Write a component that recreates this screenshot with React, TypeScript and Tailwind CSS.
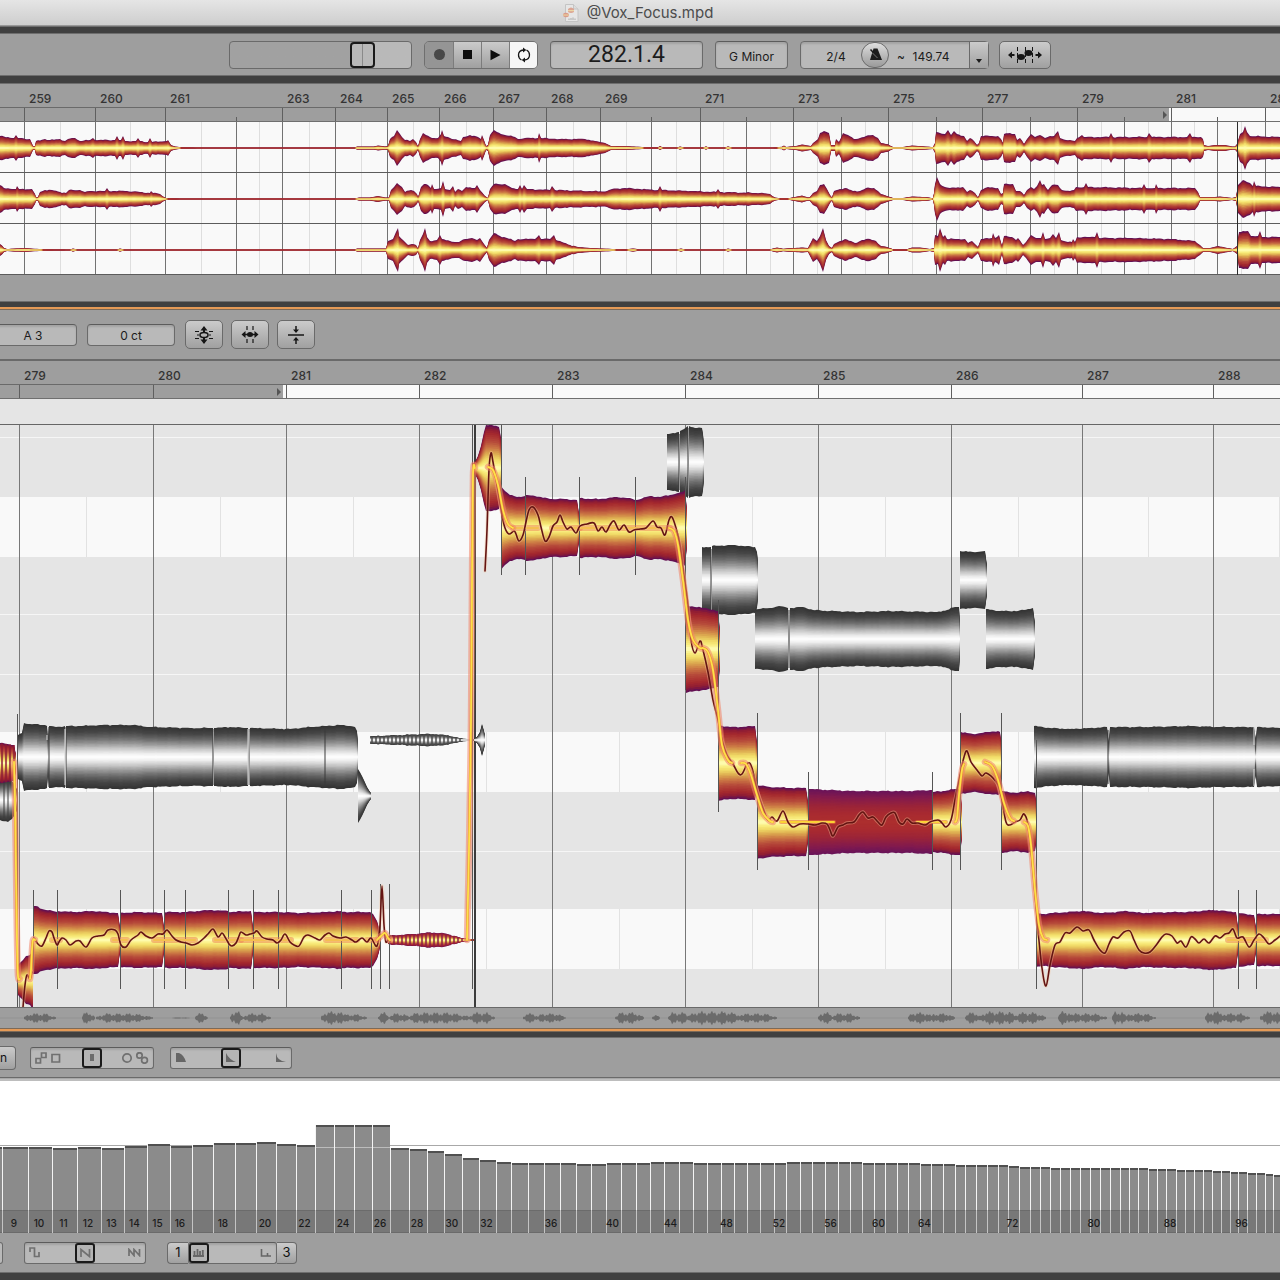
import { useState } from "react";
import type { ReactNode } from "react";

type Pt = [number, number];
type Stop = [number, number, number, number];

const SPAN = 1280;

// --- COLOUR RAMPS (edge -> centre) ---
const FIRE: Stop[] = [
  [0, 100, 16, 82],
  [0.08, 142, 28, 52],
  [0.2, 166, 42, 46],
  [0.38, 182, 74, 58],
  [0.54, 203, 120, 68],
  [0.68, 221, 172, 80],
  [0.8, 239, 215, 100],
  [0.92, 249, 238, 128],
  [1, 254, 251, 172],
];
const STEEL: Stop[] = [
  [0, 52, 52, 52],
  [0.2, 70, 70, 70],
  [0.4, 106, 106, 106],
  [0.6, 156, 156, 156],
  [0.75, 200, 200, 200],
  [0.9, 236, 236, 236],
  [1, 252, 252, 252],
];
const MUTED: Stop[] = [
  [0, 106, 20, 88],
  [0.2, 130, 26, 78],
  [0.5, 155, 36, 56],
  [0.75, 168, 42, 48],
  [1, 172, 46, 46],
];

const shade = (ramp: Stop[], t: number) => {
  let i = 1;
  while (i < ramp.length - 1 && ramp[i][0] < t) i++;
  const a = ramp[i - 1];
  const b = ramp[i];
  const f = Math.min(1, Math.max(0, (t - a[0]) / (b[0] - a[0])));
  const mix = (k: number) => Math.round(a[k] + (b[k] - a[k]) * f);
  return `rgb(${mix(1)},${mix(2)},${mix(3)})`;
};

const pairs = (list: number[]): Pt[] => {
  const out: Pt[] = [];
  for (let i = 0; i < list.length; i += 2) out.push([list[i], list[i + 1]]);
  return out;
};

const heightAt = (pts: Pt[], x: number) => {
  for (let i = 1; i < pts.length; i++) {
    if (x <= pts[i][0]) {
      const [x0, h0] = pts[i - 1];
      const [x1, h1] = pts[i];
      return h0 + ((h1 - h0) * (x - x0)) / (x1 - x0 || 1);
    }
  }
  return pts[pts.length - 1][1];
};

const ripple = (x: number) => Math.sin(x * 0.9) * 0.5 + Math.sin(x * 0.37 + 1) * 0.6 + Math.sin(x * 1.7) * 0.3;

// resample the envelope and roughen its edge a little
const roughen = (pts: Pt[], amount: number): Pt[] => {
  const out: Pt[] = [];
  pts.forEach((p, i) => {
    out.push(p);
    const next = pts[i + 1];
    if (!next) return;
    for (let x = p[0] + 2; x < next[0] - 1; x += 2) {
      const h = heightAt([p, next], x);
      out.push([x, h > 3 ? h + ripple(x) * amount : h]);
    }
  });
  return out;
};

// smooth line through a list of points
const smooth = (pts: Pt[]) => {
  let d = `M${pts[0][0]} ${pts[0][1]}`;
  for (let i = 0; i < pts.length - 1; i++) {
    const p0 = pts[i - 1] || pts[i];
    const p1 = pts[i];
    const p2 = pts[i + 1];
    const p3 = pts[i + 2] || p2;
    d += `C${p1[0] + (p2[0] - p0[0]) / 6} ${p1[1] + (p2[1] - p0[1]) / 6} ${p2[0] - (p3[0] - p1[0]) / 6} ${p2[1] - (p3[1] - p1[1]) / 6} ${p2[0]} ${p2[1]}`;
  }
  return d;
};

const Blob = ({ cy, shape, ramp = FIRE, layers = 16, rough = 0.6 }: { cy: number; shape: number[]; ramp?: Stop[]; layers?: number; rough?: number }) => {
  const pts = roughen(pairs(shape), rough);
  // near-silent parts keep only the outer, darker layers
  const scaled = (h: number, s: number) => (h < 1 && s < 0.7 ? 0 : h * s);
  const outline = (s: number) =>
    "M" +
    pts.map(([x, h]) => `${x} ${(cy - scaled(h, s)).toFixed(2)}`).join("L") +
    "L" +
    [...pts].reverse().map(([x, h]) => `${x} ${(cy + scaled(h, s)).toFixed(2)}`).join("L") +
    "Z";
  return (
    <g>
      {Array.from({ length: layers }, (_, k) => (
        <path key={k} d={outline(1 - k / layers)} fill={shade(ramp, k / (layers - 1))} />
      ))}
    </g>
  );
};

const Stripes = ({ cy, shape, from, to, color }: { cy: number; shape: number[]; from: number; to: number; color: string }) => {
  const pts = pairs(shape);
  const xs: number[] = [];
  for (let x = from; x < to; x += 4) xs.push(x);
  return (
    <g stroke={color} strokeWidth="1.5">
      {xs.map((x) => {
        const h = heightAt(pts, x);
        return <line key={x} x1={x} x2={x} y1={cy - h} y2={cy + h} />;
      })}
    </g>
  );
};

// --- OVERVIEW DATA ---
const TRACKS: { name: string; env: number[] }[] = [
  {
    name: "Track 1",
    env: [0, 12, 14, 10, 16, 13, 18, 10, 30, 9, 33, 2, 35, 2, 36, 7, 45, 9, 50, 8, 60, 9, 65, 7, 68, 9, 75, 10, 80, 7, 90, 8, 93, 10, 95, 8, 115, 8, 117, 12, 119, 8, 121, 8, 123, 12, 125, 7, 136, 7, 138, 10, 140, 7, 148, 6, 150, 10, 152, 6, 167, 7, 168, 8, 171, 3, 175, 1.5, 181, 0.8, 205, 0.5, 355, 0.5, 357, 1.5, 374, 1.5, 378, 2.5, 385, 1.5, 388, 2, 390, 9, 394, 12, 397, 18, 400, 14, 405, 8, 410, 7, 413, 9, 416, 6, 418, 1.5, 420, 9, 423, 15, 426, 13, 432, 10, 438, 10, 441, 14, 442, 18, 444, 12, 450, 10, 461, 7, 463, 11, 470, 13, 478, 11, 481, 9, 482, 13, 484, 8, 486, 2, 488, 3, 490, 13, 494, 18, 497, 16, 505, 13, 515, 11, 518, 9, 525, 10, 538, 10, 539, 15, 541, 10, 560, 9, 585, 9, 595, 7, 605, 5, 607, 4, 611, 2, 625, 1.8, 632, 1.5, 650, 0.7, 658, 0.7, 660, 1.8, 663, 0.6, 677, 0.6, 680, 1.5, 684, 0.6, 703, 0.6, 706, 1.6, 709, 0.6, 725, 0.6, 728, 1.6, 732, 0.5, 773, 0.6, 782, 1.2, 784, 2.5, 786, 1, 796, 2, 802, 3.5, 808, 2.5, 811, 2, 813, 5, 818, 9, 820, 15, 824, 17, 829, 15, 831, 3, 835, 3, 836, 9, 839, 6, 843, 15, 848, 13, 854, 9, 860, 10, 866, 12, 873, 13, 878, 10, 881, 5, 886, 4, 890, 2.5, 893, 1, 903, 1, 912, 2.5, 925, 1.5, 933, 1, 935, 5, 936, 16, 945, 14, 948, 18, 951, 13, 954, 17, 957, 14, 964, 12, 967, 7, 970, 10, 974, 7, 977, 3, 979, 5, 981, 12, 990, 12, 998, 12, 1001, 9, 1003, 5, 1004, 14, 1010, 15, 1015, 14, 1017, 8, 1020, 10, 1024, 4, 1027, 9, 1031, 14, 1035, 11, 1040, 13, 1045, 10, 1050, 12, 1054, 12, 1058, 17, 1060, 10, 1066, 8, 1075, 7, 1077, 10, 1082, 13, 1084, 11, 1109, 11, 1111, 15, 1113, 11, 1147, 11, 1149, 15, 1152, 11, 1187, 11, 1190, 15, 1192, 11, 1201, 11, 1203, 9, 1204, 3, 1208, 2, 1215, 3, 1225, 3, 1232, 1.5, 1235, 1.5, 1237, 4, 1240, 14, 1243, 16, 1245, 22, 1247, 16, 1250, 12, 1280, 11],
  },
  {
    name: "Track 2",
    env: [0, 14, 4, 11, 16, 10, 17, 13, 19, 10, 32, 10, 35, 5, 36, 1.5, 38, 2, 40, 7, 45, 9, 52, 9, 60, 7, 66, 6, 69, 9, 80, 9, 85, 7, 90, 8, 105, 8, 107, 11, 109, 8, 125, 8, 140, 7, 150, 6, 151, 8, 153, 6, 160, 5, 164, 2, 166, 1, 180, 0.6, 355, 0.5, 359, 1.5, 370, 1.5, 378, 3, 385, 1.5, 389, 1.5, 391, 9, 394, 12, 397, 16, 402, 12, 405, 7, 411, 9, 414, 8, 417, 5, 418, 1.5, 421, 12, 424, 15, 428, 14, 431, 11, 432, 15, 434, 10, 441, 11, 443, 18, 445, 10, 450, 9, 453, 13, 455, 7, 458, 10, 462, 8, 466, 12, 475, 11, 477, 14, 480, 9, 485, 3, 488, 1, 490, 10, 494, 15, 505, 15, 512, 11, 518, 10, 520, 14, 522, 10, 524, 14, 527, 10, 550, 9, 552, 13, 555, 9, 590, 8, 605, 7.5, 612, 10, 625, 11, 640, 10, 658, 9, 660, 13, 662, 9, 690, 8, 716, 7, 718, 10, 720, 7, 760, 6, 770, 5, 775, 1.5, 780, 0.8, 790, 1, 795, 2, 802, 3.5, 808, 1.5, 810, 2, 813, 6, 817, 8, 820, 14, 824, 15, 827, 10, 830, 4, 832, 1.5, 834, 8, 840, 10, 845, 11, 853, 8, 860, 8, 866, 11, 874, 11, 878, 8, 881, 5, 887, 3, 893, 1, 903, 1, 912, 2.5, 925, 2, 933, 0.8, 934, 6, 935, 15, 937, 22, 940, 15, 945, 12, 950, 11, 963, 12, 967, 7, 970, 9, 975, 6, 978, 1.5, 981, 9, 988, 12, 998, 11, 1001, 5, 1003, 6, 1004, 15, 1013, 15, 1016, 8, 1020, 8, 1024, 4, 1027, 9, 1031, 12, 1034, 10, 1037, 13, 1040, 19, 1042, 14, 1044, 15, 1048, 9, 1052, 14, 1058, 14, 1062, 9, 1070, 8, 1074, 9, 1076, 12, 1084, 12, 1086, 16, 1088, 12, 1142, 11, 1144, 15, 1146, 11, 1155, 11, 1156, 15, 1158, 11, 1195, 11, 1198, 7, 1200, 2, 1215, 2, 1220, 2.5, 1232, 1, 1236, 2, 1238, 14, 1243, 19, 1250, 16, 1253, 13, 1254, 18, 1256, 13, 1280, 12],
  },
  {
    name: "Track 3",
    env: [0, 6, 4, 2, 7, 1, 15, 1.5, 25, 1.8, 35, 1.2, 50, 0.7, 70, 0.6, 73, 1.5, 77, 0.6, 117, 0.6, 120, 1.5, 124, 0.6, 355, 0.5, 357, 1.5, 386, 1.5, 388, 9, 393, 11, 396, 18, 398, 22, 399, 14, 403, 10, 408, 5, 412, 6, 416, 5, 418, 1.5, 420, 10, 423, 16, 425, 22, 427, 13, 430, 9, 437, 10, 440, 15, 442, 11, 450, 9, 455, 8, 459, 8, 465, 11, 472, 12, 477, 10, 480, 12, 484, 6, 487, 2, 489, 10, 494, 17, 500, 14, 507, 12, 515, 9, 518, 11, 535, 11, 539, 15, 541, 11, 550, 11, 554, 15, 556, 10, 562, 8, 570, 5, 578, 3, 590, 2, 600, 1.5, 625, 0.7, 633, 1.5, 640, 0.6, 677, 0.6, 681, 1.5, 685, 0.6, 725, 0.6, 728, 1.5, 732, 0.5, 770, 0.6, 777, 2.5, 783, 1.2, 793, 2, 803, 2.5, 808, 2, 810, 6, 813, 12, 817, 9, 820, 14, 823, 22, 826, 10, 829, 4, 832, 2, 834, 6, 840, 9, 845, 11, 855, 7, 862, 10, 870, 11, 876, 9, 881, 4, 887, 3, 893, 0.8, 907, 0.8, 912, 2.5, 920, 2.5, 930, 1, 934, 2, 935, 15, 938, 14, 940, 22, 943, 13, 945, 15, 947, 11, 965, 11, 968, 7, 972, 9, 976, 5, 978, 3, 981, 11, 992, 12, 993, 17, 995, 12, 999, 15, 1002, 4, 1004, 14, 1012, 13, 1016, 10, 1018, 12, 1023, 5, 1026, 8, 1031, 15, 1036, 12, 1041, 12, 1043, 18, 1045, 11, 1050, 12, 1053, 16, 1056, 12, 1059, 18, 1061, 10, 1068, 8, 1072, 8, 1073, 11, 1075, 8, 1077, 13, 1090, 13, 1095, 13, 1097, 18, 1099, 12, 1130, 12, 1170, 11, 1195, 9, 1200, 5, 1203, 2, 1210, 2, 1218, 4, 1225, 2.5, 1233, 1, 1237, 4, 1239, 18, 1248, 19, 1251, 14, 1258, 14, 1260, 19, 1262, 13, 1280, 13],
  },
];

interface Mark {
  x: number;
  label?: string;
}

const OVERVIEW_MARKS: Mark[] = [
  { x: 24, label: "259" },
  { x: 95, label: "260" },
  { x: 165, label: "261" },
  { x: 236 },
  { x: 282, label: "263" },
  { x: 335, label: "264" },
  { x: 387, label: "265" },
  { x: 439, label: "266" },
  { x: 493, label: "267" },
  { x: 546, label: "268" },
  { x: 600, label: "269" },
  { x: 651 },
  { x: 700, label: "271" },
  { x: 746 },
  { x: 793, label: "273" },
  { x: 841 },
  { x: 888, label: "275" },
  { x: 936 },
  { x: 982, label: "277" },
  { x: 1030 },
  { x: 1077, label: "279" },
  { x: 1124 },
  { x: 1171, label: "281" },
  { x: 1217 },
  { x: 1265, label: "283" },
];

const EDITOR_MARKS: Mark[] = [
  { x: 19, label: "279" },
  { x: 153, label: "280" },
  { x: 286, label: "281" },
  { x: 419, label: "282" },
  { x: 552, label: "283" },
  { x: 685, label: "284" },
  { x: 818, label: "285" },
  { x: 951, label: "286" },
  { x: 1082, label: "287" },
  { x: 1213, label: "288" },
];

const percent = (n: number) => `${(n / SPAN) * 100}%`;
const endOf = (marks: { x: number }[], i: number) => (i + 1 < marks.length ? marks[i + 1].x : SPAN);

const Ruler = ({ marks, loopEnd }: { marks: Mark[]; loopEnd: number }) => (
  <div className="overflow-hidden bg-[#9e9e9e]">
    <div className="flex h-6 border-b border-[#6a6a6a]">
      <div className="shrink-0" style={{ width: percent(marks[0].x) }} />
      {marks.map((m, i) => (
        <div key={m.x} className="shrink-0 whitespace-nowrap pl-[5px] pt-[7px] text-xs font-medium text-[#333]" style={{ width: percent(endOf(marks, i) - m.x) }}>
          {m.label}
        </div>
      ))}
    </div>
    <div className="relative flex h-[14px] border-b border-[#6f6f6f] bg-[#f9f9f9]">
      <div className="flex items-center justify-end bg-[#9e9e9e] pr-0.5" style={{ width: percent(loopEnd) }}>
        <span className="border-y-4 border-l-4 border-y-transparent border-l-[#555]" />
      </div>
      <div className="absolute inset-0 flex items-end">
        <div className="shrink-0" style={{ width: percent(marks[0].x) }} />
        {marks.map((m, i) => (
          <div
            key={m.x}
            className={`shrink-0 border-l border-[#5f5f5f] ${m.label ? "h-full" : "h-1"}`}
            style={{ width: percent(endOf(marks, i) - m.x) }}
          />
        ))}
      </div>
    </div>
  </div>
);

const Overview = () => (
  <svg viewBox="0 0 1280 153" preserveAspectRatio="none" className="block h-[153px] w-full bg-[#f9f9f9]">
    {OVERVIEW_MARKS.map((m, i) => {
      const mid = Math.round((m.x + (i + 1 < OVERVIEW_MARKS.length ? OVERVIEW_MARKS[i + 1].x : 1312)) / 2);
      return (
        <g key={m.x}>
          <rect x={mid} y="0" width="1" height="153" fill="#dedede" />
          <rect x={m.x} y="0" width="1" height="153" fill="#727272" />
        </g>
      );
    })}
    {TRACKS.map((t, i) => (
      <g key={t.name}>
        <Blob cy={26 + i * 51} shape={t.env} layers={12} rough={0.5} />
        <rect x="0" y={50 + i * 51} width="1280" height="1" fill="#5c5c5c" />
      </g>
    ))}
    <rect x="1237" y="0" width="1" height="153" fill="#2c2c2c" />
  </svg>
);

// --- NOTE EDITOR DATA ---
const BREATH_GREY = [370, 3.5, 390, 4.5, 405, 5, 425, 6, 442, 5.5, 455, 3, 463, 1.2, 474, 0.9];
const BREATH_RED = [388, 4, 400, 5, 415, 6, 430, 7.5, 445, 6.5, 455, 4, 463, 1.5, 474, 0.8];
const HEAD_RED = [0, 20, 8, 19, 14, 18, 16, 8];

const GREY_NOTES: { cy: number; shape: number[] }[] = [
  { cy: 800, shape: [0, 20, 8, 22, 12, 19, 14, 16, 18, 8] },
  { cy: 757, shape: [17, 18, 18, 22, 22, 24, 24, 34, 30, 33, 45, 32, 47, 31, 48, 10] },
  { cy: 757, shape: [48, 10, 49, 31, 56, 30, 65, 31] },
  { cy: 757, shape: [66, 31, 80, 31, 100, 32, 133, 32, 150, 30, 190, 29, 213, 29] },
  { cy: 757, shape: [214, 29, 230, 30, 248, 29] },
  { cy: 757, shape: [250, 29, 290, 28, 310, 30, 325, 31] },
  { cy: 757, shape: [325, 31, 340, 32, 350, 31, 355, 30, 357, 26, 358, 8] },
  { cy: 796, shape: [358, 27, 362, 20, 367, 9, 370, 4, 371, 3] },
  { cy: 740, shape: BREATH_GREY },
  { cy: 740, shape: [474, 1, 477, 3, 480, 8, 482, 16, 484, 9, 485, 3] },
  { cy: 462, shape: [667, 28, 673, 29, 679, 30] },
  { cy: 462, shape: [680, 31, 684, 33, 688, 36] },
  { cy: 462, shape: [689, 36, 695, 34, 702, 34, 703, 28, 704, 15] },
  { cy: 580, shape: [702, 33, 711, 33] },
  { cy: 580, shape: [712, 34, 733, 35, 755, 33, 757, 28, 758, 15] },
  { cy: 639, shape: [755, 30, 770, 31, 779, 33, 788, 31] },
  { cy: 639, shape: [790, 31, 803, 32, 813, 29, 830, 28, 860, 27, 890, 28, 937, 27, 947, 29, 955, 32, 959, 32, 960, 10] },
  { cy: 580, shape: [960, 29, 973, 28, 985, 29, 987, 14] },
  { cy: 639, shape: [986, 30, 1000, 28, 1018, 28, 1028, 30, 1033, 31, 1035, 15] },
  { cy: 757, shape: [1034, 31, 1050, 29, 1070, 28, 1090, 29, 1107, 30, 1109, 12] },
  { cy: 757, shape: [1109, 12, 1110, 30, 1150, 30, 1190, 31, 1220, 30, 1254, 30, 1258, 4] },
  { cy: 757, shape: [1255, 1, 1257, 30, 1280, 29] },
];

const RED_NOTES: { cy: number; shape: number[]; ramp?: Stop[] }[] = [
  { cy: 763, shape: HEAD_RED },
  { cy: 980, shape: [18, 15, 23, 20, 26, 24, 30, 25, 32, 28, 33, 28] },
  { cy: 940, shape: [33, 34, 36, 34, 42, 31, 53, 29, 57, 28] },
  { cy: 940, shape: [57, 29, 75, 28, 92, 29, 118, 27, 120, 12] },
  { cy: 940, shape: [120, 27, 138, 28, 162, 27, 164, 12] },
  { cy: 940, shape: [164, 28, 185, 28, 210, 30, 228, 29] },
  { cy: 940, shape: [228, 28, 251, 29, 253, 12] },
  { cy: 940, shape: [253, 28, 278, 28, 300, 27, 325, 28, 341, 29] },
  { cy: 940, shape: [341, 28, 370, 28, 373, 26, 377, 19, 379, 12, 380, 6] },
  { cy: 940, shape: BREATH_RED },
  { cy: 468, shape: [472, 3, 475, 6, 478, 12, 481, 22, 484, 36, 486, 43, 492, 43, 499, 41, 501, 30] },
  { cy: 528, shape: [501, 42, 505, 37, 510, 33, 517, 31, 525, 32] },
  { cy: 528, shape: [525, 33, 535, 32, 550, 29, 565, 29, 577, 28, 579, 14] },
  { cy: 528, shape: [580, 30, 590, 29, 600, 29, 617, 31, 630, 30, 635, 28] },
  { cy: 528, shape: [636, 28, 650, 32, 660, 31, 675, 34, 683, 36, 685, 38, 687, 18] },
  { cy: 649, shape: [686, 44, 695, 42, 706, 41, 716, 38, 718, 38, 720, 18] },
  { cy: 763, shape: [718, 38, 730, 36, 740, 36, 755, 37, 757, 20] },
  { cy: 822, shape: [757, 37, 770, 35, 790, 34, 806, 34, 808, 20] },
  { cy: 822, shape: [809, 33, 830, 32, 850, 31, 880, 31, 910, 31, 932, 32], ramp: MUTED },
  { cy: 822, shape: [933, 30, 943, 31, 955, 33, 960, 33, 962, 15] },
  { cy: 763, shape: [961, 31, 973, 29, 988, 31, 998, 32, 1000, 31, 1002, 15] },
  { cy: 822, shape: [1001, 31, 1017, 29, 1028, 31, 1035, 29, 1037, 14] },
  { cy: 940, shape: [1036, 27, 1042, 26, 1053, 27, 1082, 29, 1103, 27, 1127, 29, 1142, 27, 1173, 28, 1187, 28, 1213, 30, 1236, 28, 1238, 12] },
  { cy: 940, shape: [1238, 27, 1254, 25, 1256, 12] },
  { cy: 940, shape: [1257, 26, 1280, 26] },
];

// x, top, bottom
const SPLITS: [number, number, number][] = [
  [17, 714, 1007], [33, 890, 970], [57, 890, 989], [120, 890, 989], [164, 890, 989], [185, 890, 989], [228, 890, 989],
  [253, 890, 989], [278, 890, 989], [341, 890, 989], [371, 890, 989], [380, 884, 989], [389, 884, 989],
  [472, 425, 989], [501, 425, 575], [525, 477, 575], [579, 477, 575], [635, 477, 575], [685, 477, 690],
  [718, 600, 812], [757, 713, 870], [808, 772, 870], [932, 772, 870], [960, 713, 870], [1001, 713, 870],
  [1036, 740, 989], [1238, 890, 989], [1256, 890, 989],
];

const PITCH: number[][] = [
  [23, 1007, 25, 985, 27, 975, 30, 979, 32, 972],
  [34, 938, 38, 944, 42, 946, 46, 938, 49, 931, 52, 932, 54, 938, 57, 945, 59, 942, 62, 938, 66, 940, 70, 945, 76, 941, 80, 941, 86, 947, 92, 938, 98, 936, 104, 935, 108, 930, 115, 930, 118, 934, 121, 945, 126, 947, 131, 940, 138, 935, 141, 932, 146, 936, 152, 938, 158, 934, 163, 934, 167, 930, 172, 936, 176, 940, 181, 942, 186, 943, 192, 945, 198, 943, 204, 938, 208, 934, 213, 929, 218, 937, 222, 933, 225, 937, 229, 944, 232, 946, 236, 943, 239, 936, 241, 932, 246, 935, 250, 934, 254, 933, 257, 931, 262, 937, 267, 939, 273, 940, 277, 943, 281, 940, 285, 934, 290, 942, 294, 945, 299, 946, 304, 937, 308, 935, 315, 938, 320, 940, 325, 935, 329, 933, 333, 936, 340, 938, 346, 937, 352, 940, 356, 942, 362, 938, 367, 942, 371, 938, 377, 946, 380, 925, 382, 886, 384, 925, 386, 942, 390, 936],
  [485, 571, 487, 530, 489, 470, 491, 453, 493, 462, 497, 485, 502, 515, 505, 528, 509, 534, 514, 531, 516, 534, 519, 541, 523, 535, 526, 522, 529, 510, 533, 507, 538, 515, 541, 527, 545, 541, 549, 537, 553, 526, 557, 522, 560, 515, 563, 522, 567, 529, 571, 527, 576, 533, 580, 526, 587, 524, 594, 523, 598, 531, 602, 527, 606, 532, 610, 525, 614, 521, 619, 530, 624, 525, 629, 532, 634, 530, 640, 529, 646, 528, 653, 521, 657, 527, 661, 528, 665, 535, 669, 520, 672, 517, 676, 528, 680, 545, 684, 575, 688, 605, 691, 640, 695, 653, 700, 641, 703, 650, 708, 672, 713, 700, 718, 720, 722, 740, 727, 755, 733, 764, 738, 773, 742, 774, 748, 763, 752, 768, 757, 790, 763, 808, 768, 820, 772, 817, 777, 821, 783, 811, 788, 822, 793, 827, 800, 824, 808, 824, 815, 825, 822, 823, 827, 824, 830, 830, 833, 836, 838, 827, 843, 825, 847, 823, 854, 822, 859, 815, 863, 812, 868, 818, 873, 817, 878, 822, 882, 825, 886, 817, 891, 813, 895, 813, 899, 822, 903, 824, 907, 819, 912, 823, 918, 823, 925, 825, 930, 822, 938, 820, 942, 823, 946, 827, 951, 820, 955, 800, 960, 775, 964, 757, 967, 751, 971, 762, 977, 770, 982, 776, 986, 773, 993, 778, 998, 785, 1002, 800, 1006, 822, 1010, 825, 1015, 822, 1020, 820, 1024, 814, 1028, 825, 1033, 870, 1038, 930, 1042, 968, 1046, 986, 1050, 965, 1055, 945, 1060, 942, 1065, 933, 1070, 933, 1077, 927, 1083, 931, 1089, 930, 1094, 940, 1100, 950, 1105, 953, 1109, 944, 1113, 937, 1118, 938, 1124, 932, 1130, 931, 1134, 940, 1139, 950, 1144, 953, 1150, 952, 1157, 944, 1162, 937, 1166, 934, 1172, 936, 1177, 943, 1181, 941, 1186, 947, 1191, 937, 1195, 939, 1199, 943, 1204, 939, 1209, 943, 1215, 936, 1220, 938, 1225, 934, 1229, 933, 1233, 929, 1237, 938, 1243, 937, 1249, 947, 1254, 940, 1259, 934, 1264, 938, 1269, 944, 1275, 940, 1280, 936],
];

const GLIDES: number[][] = [
  [14, 762, 15, 800, 16, 870, 17, 940, 18, 976, 20, 979],
  [30, 979, 31, 970, 32, 950, 33, 940, 35, 940],
  [377, 940, 381, 936, 385, 933, 388, 938, 390, 940],
  [467, 940, 469, 850, 471, 720, 472, 580, 473, 475, 475, 468],
  [488, 467, 493, 470, 498, 485, 503, 510, 508, 524, 513, 528],
  [669, 528, 674, 531, 678, 545, 683, 580, 688, 620, 693, 640, 700, 648, 703, 648, 708, 652, 713, 670, 718, 710, 722, 745, 728, 760, 732, 763],
  [741, 763, 746, 764, 751, 775, 757, 795, 763, 813, 770, 821, 773, 822],
  [955, 822, 957, 818, 959, 795, 962, 770, 964, 764],
  [985, 762, 992, 766, 998, 780, 1004, 803, 1010, 818, 1014, 821],
  [1024, 822, 1028, 826, 1031, 845, 1035, 890, 1039, 925, 1043, 938, 1047, 940],
];

// from, to, y
const HOLDS: [number, number, number][] = [
  [52, 60, 940], [113, 127, 940], [154, 195, 940], [215, 241, 940], [241, 291, 940], [326, 357, 940], [367, 378, 940],
  [513, 538, 528], [552, 580, 528], [580, 670, 528], [1228, 1266, 940],
];
const THIN_HOLDS: [number, number, number][] = [[781, 834, 822], [917, 946, 822]];

const NoteEditor = () => (
  <svg viewBox="0 425 1280 582" preserveAspectRatio="none" className="block h-[582px] w-full bg-[#e5e5e5]">
    {[497, 732, 909].map((y) => (
      <g key={y}>
        <rect x="0" y={y} width="1280" height="60" fill="#f9f9f9" />
        {[86, 220, 353, 486, 619, 752, 885, 1018, 1148, 1279].map((x) => (
          <rect key={x} x={x} y={y} width="1" height="60" fill="#e2e2e2" />
        ))}
      </g>
    ))}
    {[437, 614, 674, 851].map((y) => (
      <rect key={y} x="0" y={y} width="1280" height="1" fill="#f6f6f6" />
    ))}
    {EDITOR_MARKS.map((m) => (
      <rect key={m.x} x={m.x} y="425" width="1" height="582" fill="#787878" />
    ))}
    <rect x="474" y="425" width="2" height="582" fill="#3c3c3c" />

    {GREY_NOTES.map((n, i) => (
      <Blob key={i} {...n} ramp={STEEL} layers={22} rough={0.5} />
    ))}
    <path d="M4 782V818M8 782V820M49 727V787M66 727V787M213 729V785M249 729V785M325 727V787M679 434V490M688 428V496M711 549V612M789 610V668M1108 730V784" fill="none" stroke="#3a3a3a" />
    <path d="M248 729V785M65 729V785M47 735V740M1254 727V745M1254 769V786" stroke="#d8d8d8" fill="none" />
    <Stripes cy={740} shape={BREATH_GREY} from={372} to={462} color="#4a4a4a" />

    {RED_NOTES.map((n, i) => (
      <Blob key={i} {...n} layers={22} rough={0.5} />
    ))}
    <Stripes cy={763} shape={HEAD_RED} from={2} to={15} color="#8c1a34" />
    <Stripes cy={940} shape={BREATH_RED} from={390} to={464} color="#8c1a44" />

    {SPLITS.map(([x, y1, y2]) => (
      <rect key={x} x={x} y={y1} width="1" height={y2 - y1} fill="#555" />
    ))}

    <g fill="none" strokeLinecap="round" strokeLinejoin="round">
      {HOLDS.map(([a, b, y]) => (
        <g key={a}>
          <path d={`M${a} ${y}H${b}`} stroke="#ec7f4c" strokeOpacity="0.5" strokeWidth="6" />
          <path d={`M${a} ${y}H${b}`} stroke="#f4c050" strokeWidth="2" />
        </g>
      ))}
      {THIN_HOLDS.map(([a, b, y]) => (
        <g key={a}>
          <path d={`M${a} ${y}H${b}`} stroke="#e8743c" strokeWidth="4" strokeOpacity="0.6" />
          <path d={`M${a} ${y}H${b}`} stroke="#fbd233" strokeWidth="2" />
        </g>
      ))}
      {PITCH.map((p, i) => (
        <g key={i}>
          <path d={smooth(pairs(p))} stroke="#f7c9a0" strokeOpacity="0.4" strokeWidth="3.5" />
          <path d={smooth(pairs(p))} stroke="#641412" strokeWidth="1.6" />
        </g>
      ))}
      {GLIDES.map((p, i) => (
        <g key={i}>
          <path d={smooth(pairs(p))} stroke="#f08468" strokeOpacity="0.55" strokeWidth="6.5" />
          <path d={smooth(pairs(p))} stroke="#e8842e" strokeWidth="2.6" />
          <path d={smooth(pairs(p))} stroke="#fde14a" strokeWidth="1.8" />
        </g>
      ))}
    </g>
  </svg>
);

// source audio shown under the notes: from, to, height
const CLUSTERS: [number, number, number][] = [
  [24, 56, 5], [82, 95, 6], [96, 153, 5], [172, 190, 0.6], [195, 208, 5], [230, 243, 7], [243, 271, 5], [321, 348, 7], [340, 367, 4],
  [378, 389, 6], [389, 410, 5], [406, 472, 6], [469, 495, 6], [523, 539, 5], [537, 566, 5], [615, 644, 6], [652, 660, 3],
  [668, 692, 6], [686, 748, 7], [740, 777, 5], [818, 834, 6], [831, 860, 5], [908, 934, 6], [930, 955, 5], [965, 981, 6], [979, 1022, 7],
  [1014, 1046, 6], [1058, 1074, 7], [1068, 1107, 5], [1112, 1127, 7], [1125, 1156, 5], [1205, 1228, 7], [1222, 1250, 5], [1260, 1284, 7],
];

const SourceStrip = () => (
  <svg viewBox="0 0 1280 20" preserveAspectRatio="none" className="block h-5 w-full bg-[#9e9e9e]">
    <path d="M0 10H1280" stroke="#929292" strokeWidth="1" />
    {CLUSTERS.map(([a, b, h]) => {
      const top: string[] = [];
      const low: string[] = [];
      for (let x = a; x <= b; x++) {
        const t = (x - a) / (b - a);
        const grain = 0.66 + 0.2 * Math.sin(x * 1.9) + 0.2 * Math.sin(x * 0.61 + h);
        const r = h * Math.min(1, 5 * t + 0.2, 2.5 * (1 - t) + 0.2) * grain;
        top.push(`${x} ${(10 - r).toFixed(1)}`);
        low.unshift(`${x} ${(10 + r).toFixed(1)}`);
      }
      return <path key={a} d={`M${top.join("L")}L${low.join("L")}Z`} fill="#6b6b6b" />;
    })}
  </svg>
);

// --- HARMONICS CHART ---
const BAR_X = [
  2, 28, 52, 77, 101, 124, 147, 170, 192, 213, 235, 256, 276, 296, 315, 334, 354, 372, 390, 409, 427, 444, 462, 479, 496, 511, 528,
  544, 560, 576, 591, 606, 621, 636, 650, 664, 679, 693, 707, 721, 734, 747, 760, 774, 786, 800, 812, 825, 838, 850, 862, 874, 885,
  897, 908, 920, 931, 943, 955, 965, 976, 987, 998, 1008, 1019, 1030, 1040, 1050, 1060, 1070, 1080, 1090, 1100, 1110, 1120, 1129,
  1138, 1148, 1157, 1166, 1176, 1185, 1194, 1203, 1212, 1221, 1230, 1238, 1247, 1256, 1265, 1273,
];
const BAR_H = [
  63, 63, 62, 63, 62, 64, 66, 64, 65, 67, 67, 68, 66, 65, 85, 85, 85, 85, 62, 61, 59, 56, 52, 50, 48, 47, 47, 47, 47, 46, 46, 47, 47,
  47, 48, 48, 48, 47, 47, 47, 47, 47, 47, 47, 48, 48, 48, 48, 48, 48, 47, 47, 47, 47, 47, 46, 46, 46, 45, 45, 45, 45, 45, 44, 43, 43,
  43, 42, 42, 42, 42, 42, 42, 42, 42, 42, 42, 41, 41, 41, 40, 40, 40, 40, 39, 39, 38, 38, 37, 37, 36, 35,
];
const NAMED = [9, 10, 11, 12, 13, 14, 15, 16, 18, 20, 22, 24, 26, 28, 30, 32, 36, 40, 44, 48, 52, 56, 60, 64, 72, 80, 88, 96];

const Harmonics = () => (
  <div className="relative flex h-[154px] items-end overflow-hidden border-t-2 border-[#bdbdbd] bg-white">
    <div className="absolute inset-x-0 top-16 h-px bg-[#a8a8a8]" />
    <div className="relative flex shrink-0 flex-col" style={{ width: percent(BAR_X[0]) }}>
      <div className="h-[63px] border-t-2 border-[#505050] bg-[#8b8b8b]" />
      <div className="h-[23px] border-y border-[#6b6b6b] bg-[#787878]" />
    </div>
    {BAR_X.map((x, i) => {
      const n = i + 9;
      const picked = n >= 23 && n <= 26;
      return (
        <div key={x} className="relative flex shrink-0 flex-col" style={{ width: percent((BAR_X[i + 1] ?? SPAN) - x) }}>
          <div className="border-l border-[#f4f4f4]">
            <div className="border-t-2 border-[#505050] bg-[#8b8b8b]" style={{ height: BAR_H[i] }}>
              {picked && <div className="mt-5 h-px bg-[#bcbcbc]" />}
            </div>
          </div>
          <div className="border-l border-[#c4c4c4]">
            <div className="flex h-[23px] items-center justify-center border-y border-[#6b6b6b] bg-[#787878] pr-[3px] pt-1 text-[10px] font-medium text-[#1c1c1c]">
              {NAMED.includes(n) && <span className="relative z-10">{n}</span>}
            </div>
          </div>
        </div>
      );
    })}
  </div>
);

// --- CONTROLS ---
const RAISED = "flex items-center justify-center border border-[#6a6a6a] bg-linear-to-b from-[#cbcbcb] to-[#a0a0a0] text-[#111]";
const SUNKEN = "border border-[#6a6a6a] border-t-[#5c5c5c] bg-[#b9b9b9] text-center text-[#1c1c1c] shadow-[inset_0_2px_2px_rgba(0,0,0,0.12)] outline-none";

const Field = ({ label, value, className }: { label: string; value: string; className: string }) => (
  <input aria-label={label} defaultValue={value} className={`${SUNKEN} rounded ${className}`} />
);

const IconButton = ({ label, className, children }: { label: string; className: string; children: ReactNode }) => (
  <button type="button" aria-label={label} className={`${RAISED} ${className}`}>
    {children}
  </button>
);

// slider with small glyphs printed on its track
const GlyphSlider = ({ label, value, className, left, thumb, right }: { label: string; value: number; className: string; left?: ReactNode; thumb: ReactNode; right: ReactNode }) => (
  <div className={`relative h-[22px] ${className}`}>
    <input
      type="range"
      aria-label={label}
      defaultValue={value}
      className={`${SUNKEN} block h-full w-full appearance-none rounded-[3px] [&::-webkit-slider-thumb]:h-5 [&::-webkit-slider-thumb]:w-5 [&::-webkit-slider-thumb]:appearance-none [&::-webkit-slider-thumb]:rounded-[3px] [&::-webkit-slider-thumb]:border-2 [&::-webkit-slider-thumb]:border-[#1a1a1a] [&::-webkit-slider-thumb]:bg-[#b4b4b4]`}
    />
    <div className="pointer-events-none absolute inset-0 flex items-center justify-between px-[5px]">
      {left}
      {thumb}
      {right}
    </div>
  </div>
);

const DarkBar = ({ className = "h-2" }: { className?: string }) => <div className={`border-y border-[#6e6e6e] bg-[#404040] ${className}`} />;

const TitleBar = () => (
  <header className="flex h-[26px] items-center justify-center gap-2 border-b border-[#989898] bg-linear-to-b from-[#e5e5e5] to-[#cecece] pr-1">
    <svg width="16" height="20" viewBox="0 0 16 20">
      <path d="M2.5 1.5H10.5L15 6V18.5H2.5Z" fill="#e6e6e6" stroke="#c4c4c4" />
      <path d="M10.5 1.5V6H15" fill="#dcdcdc" stroke="#c4c4c4" />
      <path d="M5 6Q8 3 11 6V9Q8 11 5 9Z" fill="#dba593" />
      <path d="M5 7H11V8.2H5Z" fill="#ecd6a4" />
      <path d="M0 11Q2.5 8.5 6 11V13Q3 15.5 0 13Z" fill="#da9a88" />
      <path d="M0 11.5H6V12.6H0Z" fill="#ecd6a4" />
      <path d="M6 17V15.5M8 17V15M10 17V14.5M12 17V15.5" stroke="#aaa" />
    </svg>
    <h1 className="text-[15px] leading-5 text-[#4c4c4c]">@Vox_Focus.mpd</h1>
  </header>
);

const Transport = () => {
  const [cycle, setCycle] = useState(true);
  return (
    <div className="flex h-7 overflow-hidden rounded-[5px] border border-[#6f6f6f]">
      <button type="button" aria-label="Record" className="flex w-7 items-center justify-center bg-[#959595]">
        <span className="h-[11px] w-[11px] rounded-full bg-[#484848]" />
      </button>
      <button type="button" aria-label="Stop" className="flex w-7 items-center justify-center border-l border-[#7c7c7c] bg-linear-to-b from-[#cbcbcb] to-[#a0a0a0]">
        <span className="h-[9px] w-[9px] bg-[#0e0e0e]" />
      </button>
      <button type="button" aria-label="Play" className="flex w-7 items-center justify-center border-l border-[#7c7c7c] bg-linear-to-b from-[#cbcbcb] to-[#a0a0a0]">
        <svg width="11" height="12" viewBox="0 0 11 12">
          <path d="M0.5 0.8L10.5 6L0.5 11.2Z" fill="#0e0e0e" />
        </svg>
      </button>
      <button type="button" aria-label="Cycle" aria-pressed={cycle} onClick={() => setCycle(!cycle)} className={`flex w-7 items-center justify-center border-l border-[#7c7c7c] ${cycle ? "bg-[#f6f6f6]" : "bg-[#b5b5b5]"}`}>
        <svg width="14" height="16" viewBox="0 0 14 16" fill="none" stroke="#161616" strokeWidth="1.3">
          <path d="M4.5 13Q1.5 11.5 1.5 8Q1.5 3.5 6.5 3" />
          <path d="M9.5 3Q12.5 4.5 12.5 8Q12.5 12.5 7.5 13" />
          <path d="M6 0.5L9.3 3L6 5.5Z M8 10.5L4.7 13L8 15.5Z" fill="#161616" stroke="none" />
        </svg>
      </button>
    </div>
  );
};

const MainToolbar = () => (
  <div className="flex h-[41px] items-center justify-center gap-3 bg-[#9e9e9e]">
    <input
      type="range"
      aria-label="Volume"
      defaultValue={77}
      className="h-7 w-[183px] appearance-none rounded border border-[#6a6a6a] bg-linear-to-r from-[#a1a1a1] from-75% to-[#b9b9b9] to-75% [&::-webkit-slider-thumb]:h-[26px] [&::-webkit-slider-thumb]:w-[25px] [&::-webkit-slider-thumb]:appearance-none [&::-webkit-slider-thumb]:rounded [&::-webkit-slider-thumb]:border-2 [&::-webkit-slider-thumb]:border-[#1a1a1a] [&::-webkit-slider-thumb]:bg-[linear-gradient(to_right,#b9b9b9_10px,#8a8a8a_10px,#8a8a8a_11px,#b9b9b9_11px)]"
    />
    <Transport />
    <Field label="Position" value="282.1.4" className="h-7 w-[153px] font-['Roboto','Inter',sans-serif] text-[23px] leading-6" />
    <button type="button" className={`${SUNKEN} h-7 w-[73px] rounded pt-1 text-xs`}>
      G Minor
    </button>
    <div className="flex items-center gap-[10px]">
      <div className="flex h-7 w-[189px] items-stretch rounded border border-[#6a6a6a] bg-[#b9b9b9] text-xs text-[#1c1c1c] shadow-[inset_0_2px_2px_rgba(0,0,0,0.12)]">
        <input aria-label="Time signature" defaultValue="2/4" className="w-[60px] bg-transparent pl-[10px] pt-1 text-center outline-none" />
        <button type="button" aria-label="Metronome" className="flex h-[26px] w-7 items-center justify-center rounded-full border border-[#6a6a6a] bg-linear-to-b from-[#dedede] to-[#9a9a9a]">
          <svg width="17" height="15" viewBox="0 0 17 15">
            <path d="M6.5 1.5H10.5L15 13H3Z" fill="#1d1d1d" />
            <path d="M3.5 2.5L10 9.5" stroke="#1d1d1d" strokeWidth="1.5" />
            <path d="M5.5 6L10.5 11" stroke="#8d8d8d" strokeWidth="0.8" />
          </svg>
        </button>
        <label className="flex items-center pt-1">
          <span className="pl-2">~</span>
          <input aria-label="Tempo" defaultValue="149.74" className="w-[52px] bg-transparent text-center outline-none" />
        </label>
        <button type="button" aria-label="Tempo options" className="ml-auto flex w-[19px] items-end justify-center border-l border-[#6a6a6a] bg-linear-to-b from-[#cbcbcb] to-[#a0a0a0] pb-[5px]">
          <span className="border-x-[3px] border-t-4 border-x-transparent border-t-[#1c1c1c]" />
        </button>
      </div>
      <IconButton label="Note assignment" className="h-7 w-[52px] rounded-[5px]">
        <svg width="34" height="16" viewBox="0 0 34 16">
          <path d="M0 8L4 4.500V11.500ZM34 8L30 4.500V11.500Z" fill="#161616" />
          <path d="M3 8H6.500M27.500 8H31" stroke="#161616" strokeWidth="2" />
          <path d="M9.500 0V16M17.500 0V16M24.500 0V16" stroke="#161616" strokeDasharray="4 2" />
          <ellipse cx="13" cy="10" rx="4" ry="3" fill="#161616" />
          <ellipse cx="20.5" cy="6" rx="4" ry="3" fill="#161616" />
        </svg>
      </IconButton>
    </div>
  </div>
);

const EditToolbar = () => (
  <div className="flex h-[49px] items-center gap-2 overflow-hidden bg-[#9e9e9e]">
    <Field label="Note pitch" value="A 3" className="-ml-[11px] mr-0.5 h-[22px] w-[88px] pt-0.5 text-xs" />
    <Field label="Pitch deviation" value="0 ct" className="mr-0.5 h-[22px] w-[88px] pt-0.5 text-xs" />
    <IconButton label="Pitch" className="h-[29px] w-[38px] rounded-[5px]">
      <svg width="20" height="18" viewBox="0 0 20 18" fill="none" stroke="#161616">
        <path d="M10 1V6M10 12V17" strokeWidth="2" />
        <path d="M10 0L13.500 4.500H6.500ZM10 18L13.500 13.500H6.500Z" fill="#161616" stroke="none" />
        <ellipse cx="10" cy="9" rx="4" ry="2.5" strokeWidth="1.5" />
        <path d="M1 5.500H5M15 5.500H19M1 12.500H5M15 12.500H19" strokeWidth="1.2" />
        <path d="M3 9H5M15 9H17" strokeWidth="1" />
      </svg>
    </IconButton>
    <IconButton label="Time" className="h-[29px] w-[38px] rounded-[5px]">
      <svg width="18" height="17" viewBox="0 0 18 17" fill="none" stroke="#161616">
        <path d="M6 0V4M12 0V4M6 13V17M12 13V17" strokeWidth="1.2" />
        <path d="M2 8.500H16" strokeWidth="1.5" />
        <path d="M0.500 8.500L4.500 5V12ZM17.500 8.500L13.500 5V12Z" fill="#161616" stroke="none" />
        <ellipse cx="9" cy="8.5" rx="3" ry="2.5" fill="#161616" stroke="none" />
      </svg>
    </IconButton>
    <IconButton label="Quantize" className="h-[29px] w-[38px] rounded-[5px]">
      <svg width="16" height="20" viewBox="0 0 16 20">
        <path d="M0 10H16M8 1V6M8 14V19" stroke="#161616" strokeWidth="1.5" />
        <path d="M8 8L5 4.500H11ZM8 12L5 15.500H11Z" fill="#161616" />
      </svg>
    </IconButton>
  </div>
);

const SoundToolbar = () => (
  <div className="flex h-[39px] items-center bg-[#9e9e9e]">
    <button type="button" className="h-6 w-4 rounded-r border border-l-0 border-[#6a6a6a] bg-linear-to-b from-[#cbcbcb] to-[#a0a0a0] text-left text-xs text-[#111]">
      n
    </button>
    <div className="ml-[14px]">
      <GlyphSlider
        label="Harmonics"
        value={50}
        className="w-[124px]"
        left={
          <svg width="28" height="12" viewBox="0 0 28 12" fill="none" stroke="#707070" strokeWidth="1.7">
            <path d="M1 6.500H5.500V11H1ZM6.500 1H11V5.500H6.500ZM17 2.500H24.500V10H17Z" />
          </svg>
        }
        thumb={<span className="h-[7px] w-1 bg-[#6c6c6c]" />}
        right={
          <svg width="28" height="12" viewBox="0 0 28 12" fill="none" stroke="#707070" strokeWidth="1.7">
            <circle cx="6" cy="6" r="4.2" />
            <circle cx="18.5" cy="3.5" r="2.7" />
            <circle cx="23.5" cy="8.3" r="2.9" />
          </svg>
        }
      />
    </div>
    <div className="ml-4">
      <GlyphSlider
        label="Brilliance"
        value={50}
        className="w-[122px]"
        left={
          <svg width="12" height="10" viewBox="0 0 12 10">
            <path d="M1 9V0H4Q9 2 11 9Z" fill="#666" />
          </svg>
        }
        thumb={
          <svg width="10" height="10" viewBox="0 0 10 10">
            <path d="M0 9V0Q3 6.500 10 9Z" fill="#666" />
          </svg>
        }
        right={
          <svg width="12" height="10" viewBox="0 0 12 10">
            <path d="M1 9V0Q2 8 11 9Z" fill="#666" />
          </svg>
        }
      />
    </div>
  </div>
);

const ContourToolbar = () => (
  <div className="flex h-[39px] items-center bg-[#9e9e9e]">
    <button type="button" aria-label="Emphasis" className="h-[22px] w-[3px] rounded-r border border-l-0 border-[#6a6a6a] bg-[#b9b9b9]" />
    <div className="ml-[21px]">
      <GlyphSlider
        label="Contour"
        value={50}
        className="w-[122px]"
        left={
          <svg width="13" height="11" viewBox="0 0 13 11" fill="none" stroke="#707070" strokeWidth="1.7">
            <path d="M1 5V1H5.500V9.500H10V5" />
          </svg>
        }
        thumb={
          <svg width="11" height="10" viewBox="0 0 11 10" fill="none" stroke="#707070" strokeWidth="1.7">
            <path d="M1 9V1.500L9.500 8.500V1" />
          </svg>
        }
        right={
          <svg width="13" height="9" viewBox="0 0 13 9" fill="none" stroke="#707070" strokeWidth="1.7">
            <path d="M1 8V1.500L6 7.500V1.500L11.500 7.500V1" />
          </svg>
        }
      />
    </div>
    <div className="ml-[21px] flex">
      <button type="button" className={`${RAISED} h-[22px] w-[21px] rounded-l border-r-0 text-[13px]`}>
        1
      </button>
      <GlyphSlider
        label="Detail"
        value={0}
        className="w-[89px]"
        thumb={
          <svg width="11" height="9" viewBox="0 0 11 9" fill="none" stroke="#666" strokeWidth="1.8">
            <path d="M0 8H11M1.500 8V3M4.500 8V1M7 8V3M9.800 8V2" />
          </svg>
        }
        right={
          <svg width="12" height="9" viewBox="0 0 12 9" fill="none" stroke="#666" strokeWidth="1.6">
            <path d="M1.500 1V8H11M7.500 8V5" />
          </svg>
        }
      />
      <button type="button" className={`${RAISED} h-[22px] w-5 rounded-r border-l-0 text-[13px]`}>
        3
      </button>
    </div>
  </div>
);

export default function App() {
  return (
    <main className="min-h-screen w-full overflow-hidden bg-[#404040] font-['Inter','Liberation_Sans',sans-serif]">
      <TitleBar />
      <DarkBar />
      <MainToolbar />
      <DarkBar className="h-[9px]" />
      <section aria-label="Overview" className="bg-[#9e9e9e] pb-[26px]">
        <Ruler marks={OVERVIEW_MARKS} loopEnd={1169} />
        <Overview />
      </section>
      <div className="h-[6px] border-t border-[#6e6e6e] bg-[#404040]" />
      <div className="h-[3px] border-b border-[#7c6a58] bg-[#e59a56]" />

      <section aria-label="Note editor">
        <EditToolbar />
        <div className="border-t-2 border-[#6a6a6a]">
          <Ruler marks={EDITOR_MARKS} loopEnd={283} />
        </div>
        <div className="h-[26px] border-b border-[#666] bg-[#e5e5e5]" />
        <NoteEditor />
        <div className="border-t border-[#6a6a6a]">
          <SourceStrip />
        </div>
      </section>
      <div className="h-1 border-y border-y-[#7c6a58] bg-[#e59a56]" />
      <div className="h-[6px] border-b border-[#6e6e6e] bg-[#404040]" />

      <section aria-label="Sound editor">
        <SoundToolbar />
        <div className="h-0.5 border-t border-[#6a6a6a] bg-[#a8a8a8]" />
        <Harmonics />
        <ContourToolbar />
      </section>
      <div className="h-2 border-t border-[#6e6e6e] bg-[#404040]" />
    </main>
  );
}
